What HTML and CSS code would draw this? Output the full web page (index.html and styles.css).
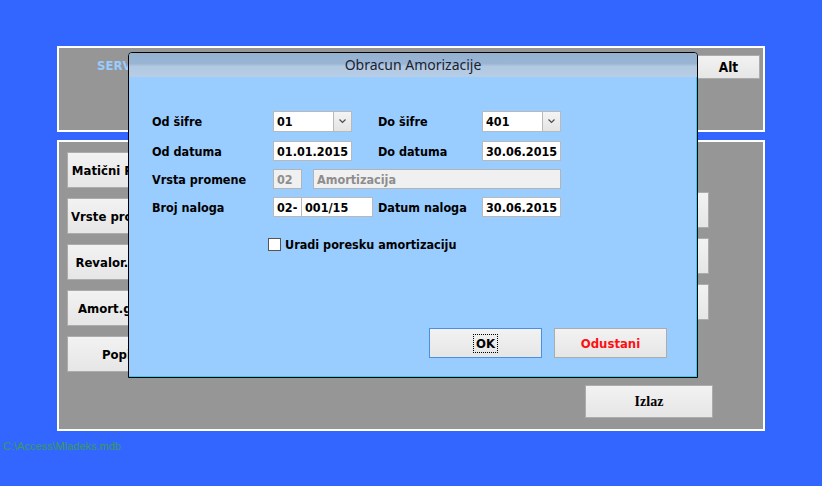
FILE: index.html
```html
<!DOCTYPE html>
<html lang="sr">
<head>
    <meta charset="UTF-8">
    <title>Obracun Amorizacije</title>
    <link rel="stylesheet" href="styles.css">
</head>
<body>

<div class="panel top-panel">
    <div class="serv">SERVIS</div>
    <button class="btn alt-btn">Alt</button>
</div>

<div class="panel main-panel">
    <div class="col left-col">
        <button class="btn menu-btn">Matični Podaci</button>
        <button class="btn menu-btn">Vrste promena</button>
        <button class="btn menu-btn">Revalor. koef.</button>
        <button class="btn menu-btn">Amort.grupe</button>
        <button class="btn menu-btn">Popis</button>
    </div>
    <div class="col right-col">
        <button class="btn menu-btn wide">Obracun</button>
        <button class="btn menu-btn wide">Pregledi</button>
        <button class="btn menu-btn wide">Stampa</button>
        <button class="btn exit-btn">Izlaz</button>
    </div>
</div>

<div class="db-path">C:\Access\Mladeks.mdb</div>

<!-- dialog over the main form -->
<div class="dialog">
    <div class="dialog-title">Obracun Amorizacije</div>
    <div class="dialog-body">
        <div class="row row-first">
            <label class="lbl">Od šifre</label>
            <div class="combo">
                <span class="field-text">01</span>
                <span class="drop"><svg width="7" height="5" viewBox="0 0 7 5"><path d="M0.5 0.5 L3.5 3.5 L6.5 0.5" fill="none" stroke="#4d4d4d" stroke-width="1.2"/></svg></span>
            </div>
            <label class="lbl lbl2">Do šifre</label>
            <div class="combo">
                <span class="field-text">401</span>
                <span class="drop"><svg width="7" height="5" viewBox="0 0 7 5"><path d="M0.5 0.5 L3.5 3.5 L6.5 0.5" fill="none" stroke="#4d4d4d" stroke-width="1.2"/></svg></span>
            </div>
        </div>
        <div class="row">
            <label class="lbl">Od datuma</label>
            <div class="field date">01.01.2015</div>
            <label class="lbl lbl2">Do datuma</label>
            <div class="field date">30.06.2015</div>
        </div>
        <div class="row">
            <label class="lbl">Vrsta promene</label>
            <div class="field disabled short">02</div>
            <div class="field disabled long">Amortizacija</div>
        </div>
        <div class="row">
            <label class="lbl">Broj naloga</label>
            <div class="field short">02-</div>
            <div class="field nalog">001/15</div>
            <label class="lbl lbl3">Datum naloga</label>
            <div class="field date">30.06.2015</div>
        </div>
        <div class="check-row">
            <span class="checkbox"></span>
            <span class="lbl">Uradi poresku amortizaciju</span>
        </div>
        <div class="dialog-buttons">
            <button class="btn dlg-btn ok-btn"><span class="focus">OK</span></button>
            <button class="btn dlg-btn cancel-btn">Odustani</button>
        </div>
    </div>
</div>

</body>
</html>
```

FILE: styles.css
```css
body {
    margin: 0;
    background-color: #3366ff;
    font-family: "DejaVu Sans Condensed", "Liberation Sans", sans-serif;
    font-size: 12.5px;
    font-weight: bold;
    width: 822px;
    height: 486px;
    overflow: hidden;
    position: relative;
}

.panel {
    background-color: #969696;
    border: 2px solid #fff;
    margin: 0 57px;
    box-sizing: border-box;
}

.btn {
    font-family: inherit;
    font-weight: bold;
    background: linear-gradient(#f2f2f2, #e6e6e6);
    border: 1px solid #acacac;
    color: #000;
    padding: 0;
    white-space: nowrap;
    overflow: hidden;
}

/* top strip */
.top-panel {
    margin-top: 46px;
    height: 86px;
    display: flex;
    justify-content: space-between;
    align-items: flex-start;
    padding: 7px 3px 0 38px;
}
.serv {
    color: #99ccff;
    font-size: 13px;
    margin-top: 3px;
}
.alt-btn {
    width: 63px;
    height: 24px;
    font-size: 13.5px;
}

/* main form */
.main-panel {
    margin-top: 8px;
    height: 291px;
    display: flex;
    justify-content: space-between;
    padding: 10px 54px 0 8px;
}
.col {
    display: flex;
    flex-direction: column;
    gap: 10px;
}
.right-col {
    padding-top: 40px;
    align-items: flex-start;
}
.menu-btn {
    width: 106px;
    height: 36px;
    font-size: 13px;
}
.menu-btn.wide {
    width: 128px;
}
.exit-btn {
    width: 128px;
    height: 33px;
    margin-top: 55px;
    margin-left: 4px;
    margin-right: -4px;
    font-family: "Liberation Serif", serif;
    font-size: 14px;
}

.db-path {
    margin: 9px 0 0 3px;
    color: #3c9a5c;
    font-family: "Liberation Sans", sans-serif;
    font-weight: normal;
    font-size: 11px;
}

/* dialog */
.dialog {
    position: absolute;
    left: 128px;
    top: 52px;
    width: 570px;
    height: 326px;
    box-sizing: border-box;
    border: 1px solid #000;
    border-radius: 4px 4px 0 0;
    background-color: #99ccff;
    box-shadow: inset -1px -1px 0 #33ccee;
    overflow: hidden;
}
.dialog-title {
    height: 24px;
    line-height: 24px;
    text-align: center;
    font-family: "Noto Sans", sans-serif;
    font-weight: normal;
    font-size: 14px;
    color: #1a2232;
    background: linear-gradient(#94b1d1 0%, #9ab5d4 45%, #b1c8e1 55%, #b8cee6 100%);
}
.dialog-body {
    padding: 34px 0 0 23px;
}

.row {
    display: flex;
    align-items: center;
    height: 20px;
    margin-bottom: 8px;
}
.row-first {
    height: 21px;
    margin-bottom: 9px;
}
.lbl {
    color: #000;
}
.row .lbl {
    width: 121px;
}
.row .lbl2 {
    width: 104px;
    padding-left: 26px;
}
.row .lbl3 {
    width: 104px;
    padding-left: 5px;
}

.field,
.combo {
    box-sizing: border-box;
    height: 100%;
    background-color: #fff;
    border: 1px solid #b9b9b9;
    color: #000;
    display: flex;
    align-items: center;
    padding-left: 3px;
}
.combo {
    width: 79px;
    justify-content: space-between;
    padding-right: 0;
}
.drop {
    width: 18px;
    height: 100%;
    box-sizing: border-box;
    border-left: 1px solid #b9b9b9;
    background: linear-gradient(#f4f4f4, #e4e4e4);
    display: flex;
    align-items: center;
    justify-content: center;
}
.date {
    width: 79px;
    padding-left: 3px;
}
.short {
    width: 29px;
}
.nalog {
    width: 71px;
    border-left: none;
}
.long {
    width: 248px;
    margin-left: 11px;
}
.disabled {
    background-color: #f0f0f0;
    color: #8d8d8d;
    border-color: #b4b4b4;
}

.check-row {
    display: flex;
    align-items: center;
    gap: 4px;
    margin: 21px 0 0 116px;
    height: 13px;
}
.checkbox {
    width: 13px;
    height: 13px;
    box-sizing: border-box;
    border: 1px solid #555;
    background-color: #fff;
}

.dialog-buttons {
    display: flex;
    justify-content: flex-end;
    gap: 12px;
    margin-top: 77px;
    padding-right: 30px;
}
.dlg-btn {
    width: 113px;
    height: 30px;
    font-size: 13px;
}
.ok-btn {
    border-color: #4a90e0;
}
.focus {
    outline: 1px dotted #000;
    padding: 1px 2px;
}
.cancel-btn {
    color: #ff1010;
}
```
